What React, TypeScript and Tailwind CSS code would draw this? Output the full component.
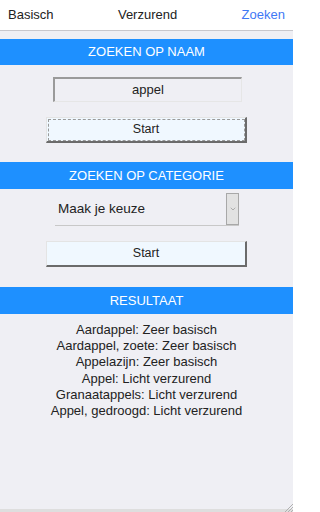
import { ChevronDown } from "lucide-react";

const results = [
  "Aardappel: Zeer basisch",
  "Aardappel, zoete: Zeer basisch",
  "Appelazijn: Zeer basisch",
  "Appel: Licht verzurend",
  "Granaatappels: Licht verzurend",
  "Appel, gedroogd: Licht verzurend",
];

const SectionHeader = ({ title, className }: { title: string; className?: string }) => (
  <div
    className={`flex h-[26px] items-center justify-center bg-[#1e90ff] text-[13px] text-white ${className ?? ""}`}
  >
    {title}
  </div>
);

const StartButton = ({ focused, className }: { focused?: boolean; className?: string }) => (
  <button
    className={`mx-auto block h-[26px] w-[201px] border-t border-l border-t-[#e4e4e4] border-l-[#e4e4e4] border-r-2 border-b-2 border-r-[#6b6b6b] border-b-[#6b6b6b] bg-[#f0f8ff] text-[12.5px] text-[#222] ${
      focused ? "outline-1 outline-dashed outline-[#9a9a9a] outline-offset-[-3px]" : ""
    } ${className ?? ""}`}
  >
    Start
  </button>
);

const App = () => {
  return (
    <div className="relative flex h-[512px] w-[293px] flex-col overflow-hidden bg-[#efeff4] font-['Liberation_Sans',Arial,sans-serif] text-[#222]">
      <nav className="flex h-[31px] items-center justify-between border-b border-[#c8c7cc] bg-white px-[8px] text-[13px]">
        <span>Basisch</span>
        <span>Verzurend</span>
        <span className="text-[#3f78f5]">Zoeken</span>
      </nav>

      <SectionHeader title="ZOEKEN OP NAAM" className="mt-[8px]" />

      <div className="ml-[53px] mt-[12px] flex h-[25px] w-[189px] items-center justify-center border-t-2 border-l-2 border-r border-b border-t-[#9a9a9a] border-l-[#9a9a9a] border-r-[#e6e6e6] border-b-[#e6e6e6] text-[13px]">
        appel
      </div>

      <StartButton focused className="mt-[15px]" />

      <SectionHeader title="ZOEKEN OP CATEGORIE" className="mt-[19px] h-[27px]" />

      <div className="ml-[55px] mt-[4px] flex h-[33px] w-[184px] items-stretch border-b border-[#c8c8c8]">
        <span className="flex flex-1 items-center pl-[3px] text-[13.5px]">Maak je keuze</span>
        <span className="flex w-[13px] items-center justify-center border border-[#a8a8a8] bg-[#e2e2e2] text-[#777]">
          <ChevronDown size={8} strokeWidth={1.5} />
        </span>
      </div>

      <StartButton className="mt-[15px]" />

      <SectionHeader title="RESULTAAT" className="mt-[20px] h-[27px]" />

      <div className="mt-[8px] flex flex-col items-center text-[13px] leading-[16.2px]">
        {results.map((r) => (
          <span key={r}>{r}</span>
        ))}
      </div>

      <div className="flex-1" />
      <div className="h-[3px] bg-[#dedede]" />
      <svg className="absolute bottom-0 right-0" width="10" height="10" viewBox="0 0 10 10">
        <path d="M10 2 L2 10 M10 5 L5 10 M10 8 L8 10" stroke="#b0b0b0" strokeWidth="1" />
      </svg>
    </div>
  );
};

export default App;
